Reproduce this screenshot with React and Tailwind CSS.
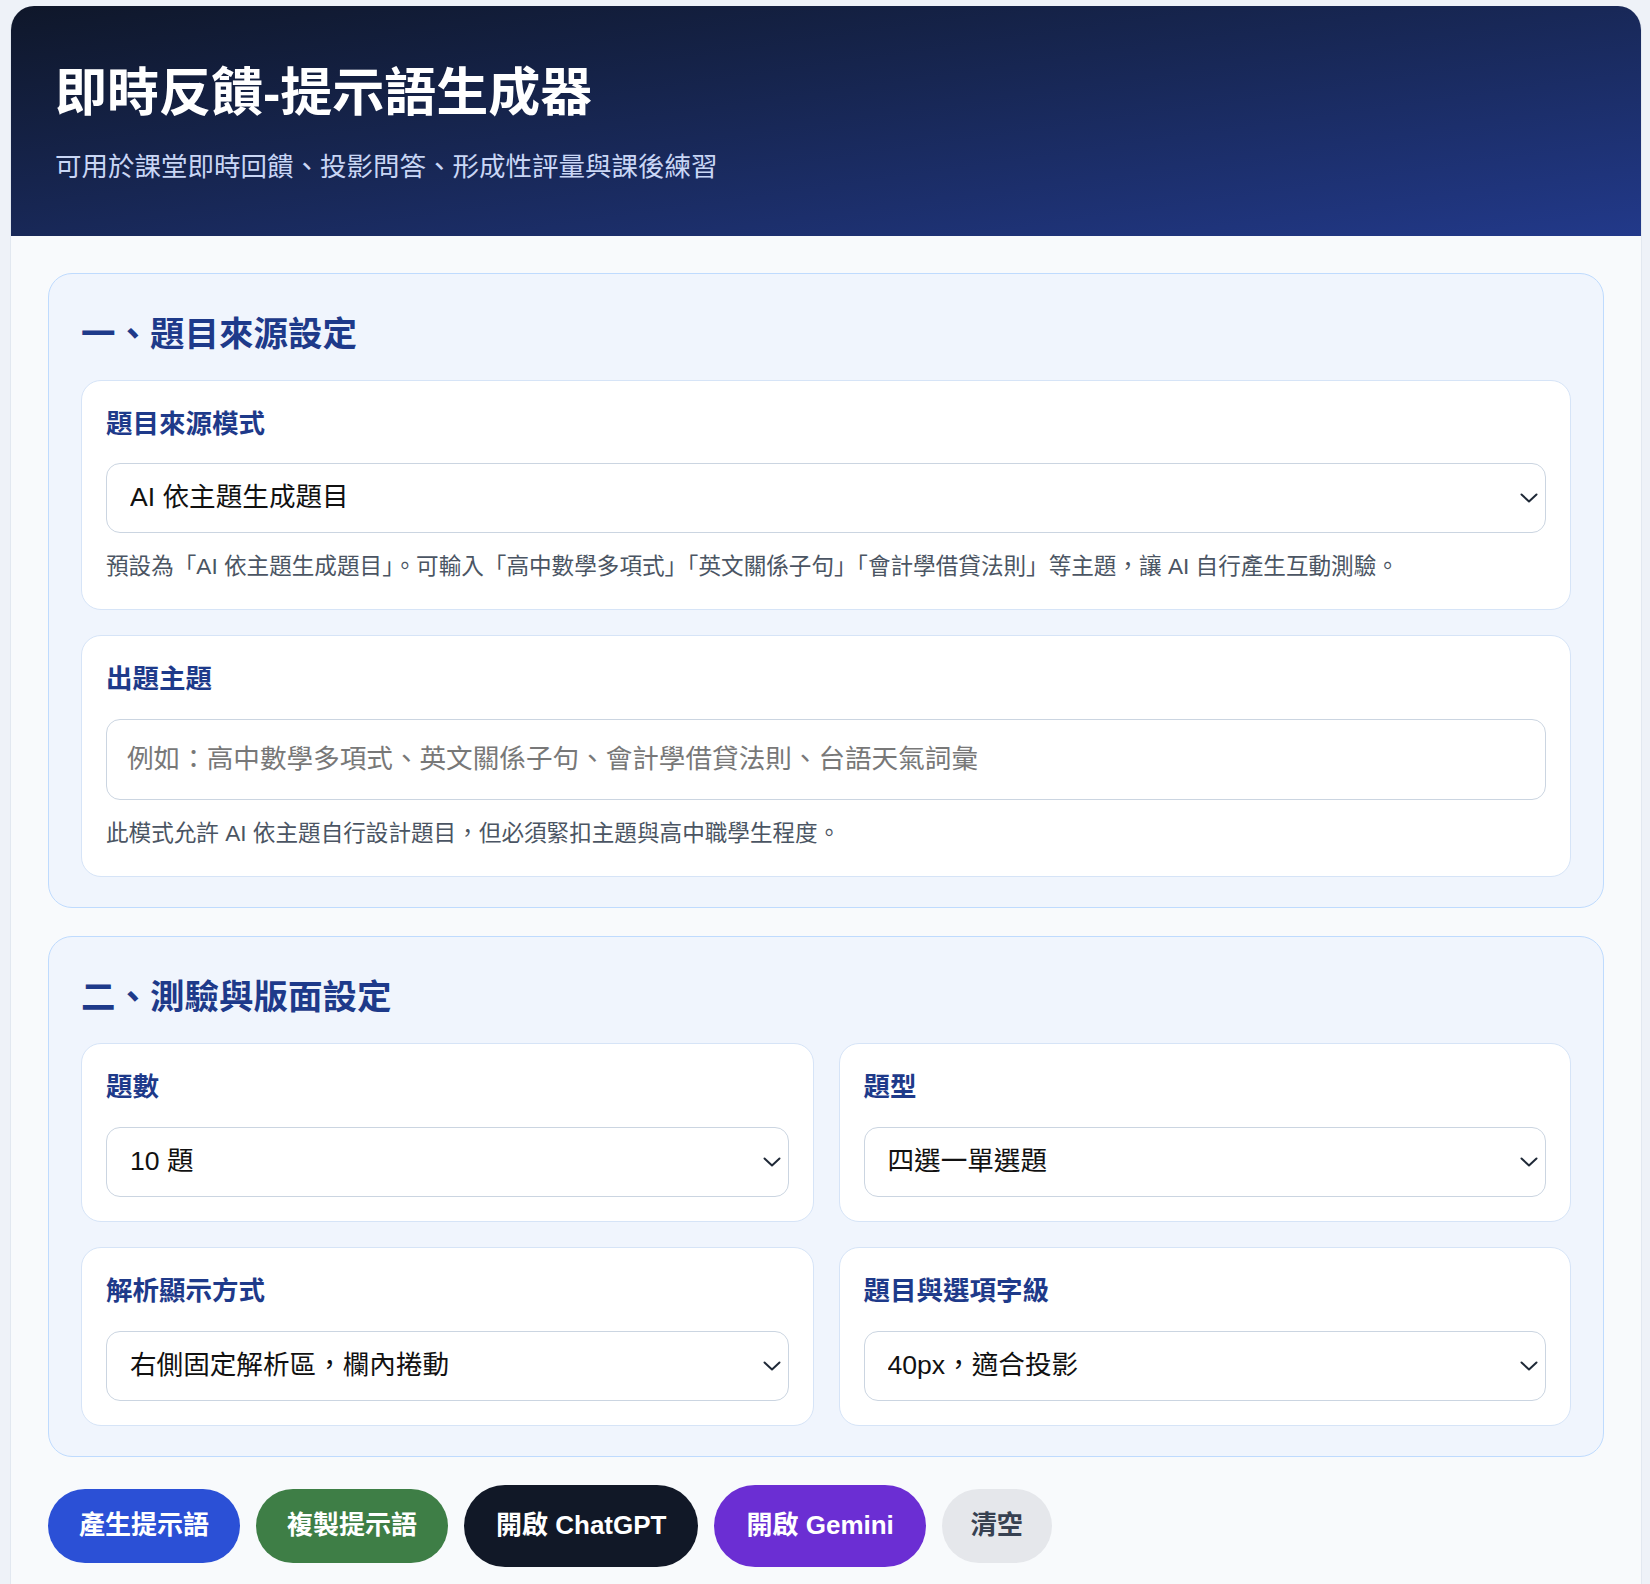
import { useState } from "react";

const FONT = { fontFamily: '"Liberation Sans", "Noto Sans CJK TC", sans-serif' };

function Chevron() {
  return (
    <svg
      aria-hidden="true"
      className="pointer-events-none absolute right-[8px] top-1/2 h-[10px] w-[18px] -translate-y-1/2 text-[#1f2937]"
      fill="none"
      stroke="currentColor"
      strokeLinecap="round"
      strokeLinejoin="round"
      strokeWidth="2"
      viewBox="0 0 18 10"
    >
      <path d="M1.5 1.5l7.5 7 7.5-7" />
    </svg>
  );
}

function SelectField({ value, onChange, options }) {
  return (
    <div className="relative">
      <select
        className="h-[70px] w-full appearance-none rounded-[14px] border border-[#cbd5e1] bg-white pl-[23px] pr-10 text-[26.6px] text-[#111111] outline-none"
        onChange={(event) => onChange(event.target.value)}
        value={value}
      >
        {options.map((option) => (
          <option key={option} value={option}>
            {option}
          </option>
        ))}
      </select>
      <Chevron />
    </div>
  );
}

function Card({ label, children }) {
  return (
    <div className="rounded-[20px] border border-[#d6e4f7] bg-white p-6">
      <label className="mb-[19px] block text-[26.5px] font-bold leading-[1.5] text-[#1e3a8a]">{label}</label>
      {children}
    </div>
  );
}

function Hint({ children }) {
  return <p className="mt-4 text-[22.6px] leading-[1.6] text-[#4b5563]">{children}</p>;
}

function Section({ title, children }) {
  return (
    <section className="rounded-3xl border border-[#bfdbfe] bg-[#f0f5fd] px-8 pb-[30px] pt-[35px]">
      <h2 className="mb-[19px] text-[34.5px] font-bold leading-[1.5] text-[#1e3a8a]">{title}</h2>
      {children}
    </section>
  );
}

export default function App() {
  const [mode, setMode] = useState("AI 依主題生成題目");
  const [topic, setTopic] = useState("");
  const [count, setCount] = useState("10 題");
  const [kind, setKind] = useState("四選一單選題");
  const [review, setReview] = useState("右側固定解析區，欄內捲動");
  const [size, setSize] = useState("40px，適合投影");

  const clear = () => {
    setTopic("");
  };

  return (
    <div className="min-h-screen bg-[#eef2f8] pt-[6px]" style={FONT}>
      <div className="ml-[10px] mr-[8px] overflow-hidden rounded-t-3xl border-x border-[#e2e8f0] bg-[#f8fafc]">
        <header className="bg-linear-to-br from-[#0f172a] to-[#22398a] px-11 pb-12 pt-12">
          <h1 className="text-[52px] font-bold leading-[1.5] text-white">即時反饋-提示語生成器</h1>
          <p className="mt-4 text-[26.5px] leading-[1.5] text-[#c9d6f5]">
            可用於課堂即時回饋、投影問答、形成性評量與課後練習
          </p>
        </header>

        <main className="px-[37px] pb-10 pt-[37px]">
          <div className="flex flex-col gap-7">
            <Section title="一、題目來源設定">
              <div className="flex flex-col gap-[25px]">
                <Card label="題目來源模式">
                  <SelectField
                    onChange={setMode}
                    options={["AI 依主題生成題目", "貼上既有題目"]}
                    value={mode}
                  />
                  <Hint>
                    預設為「AI 依主題生成題目」。可輸入「高中數學多項式」「英文關係子句」「會計學借貸法則」等主題，讓 AI 自行產生互動測驗。
                  </Hint>
                </Card>

                <Card label="出題主題">
                  <input
                    className="h-[81px] w-full rounded-[14px] border border-[#cbd5e1] bg-white px-5 text-[26.6px] text-[#111111] outline-none placeholder:text-[#787878]"
                    onChange={(event) => setTopic(event.target.value)}
                    placeholder="例如：高中數學多項式、英文關係子句、會計學借貸法則、台語天氣詞彙"
                    value={topic}
                  />
                  <Hint>此模式允許 AI 依主題自行設計題目，但必須緊扣主題與高中職學生程度。</Hint>
                </Card>
              </div>
            </Section>

            <Section title="二、測驗與版面設定">
              <div className="grid grid-cols-2 gap-[25px]">
                <Card label="題數">
                  <SelectField onChange={setCount} options={["5 題", "10 題", "15 題", "20 題"]} value={count} />
                </Card>
                <Card label="題型">
                  <SelectField onChange={setKind} options={["四選一單選題", "是非題", "混合題型"]} value={kind} />
                </Card>
                <Card label="解析顯示方式">
                  <SelectField
                    onChange={setReview}
                    options={["右側固定解析區，欄內捲動", "作答後彈出解析"]}
                    value={review}
                  />
                </Card>
                <Card label="題目與選項字級">
                  <SelectField
                    onChange={setSize}
                    options={["32px，一般螢幕", "40px，適合投影", "48px，大型教室"]}
                    value={size}
                  />
                </Card>
              </div>
            </Section>
          </div>

          <div className="mt-7 flex flex-wrap items-center gap-4">
            <button className="h-[74px] rounded-full bg-[#2b50d6] px-[31px] text-[26px] font-bold text-white" type="button">
              產生提示語
            </button>
            <button className="h-[74px] rounded-full bg-[#3e7e46] px-[31px] text-[26px] font-bold text-white" type="button">
              複製提示語
            </button>
            <a className="flex h-[82px] items-center rounded-full bg-[#111827] px-[32px] text-[26px] font-bold text-white" href="#chatgpt">
              開啟 ChatGPT
            </a>
            <a className="flex h-[82px] items-center rounded-full bg-[#6b2ed3] px-[32px] text-[26px] font-bold text-white" href="#gemini">
              開啟 Gemini
            </a>
            <button
              className="h-[74px] rounded-full bg-[#e5e7eb] px-[29px] text-[26px] font-bold text-[#374151]"
              onClick={clear}
              type="button"
            >
              清空
            </button>
          </div>
        </main>
      </div>
    </div>
  );
}
